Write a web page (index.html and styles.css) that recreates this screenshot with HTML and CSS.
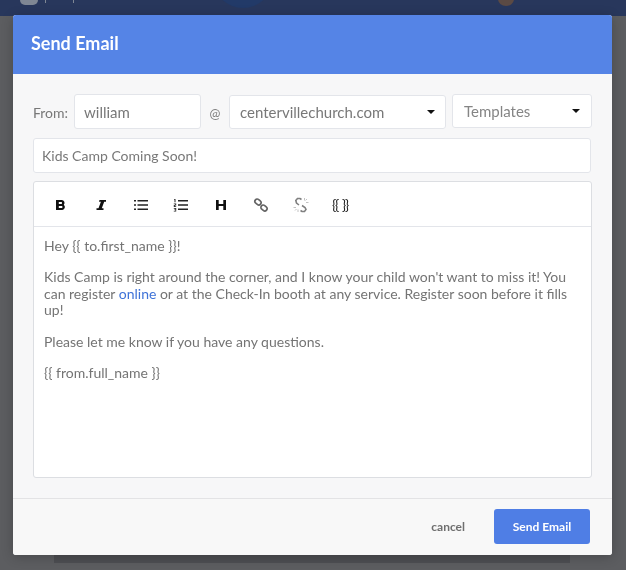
FILE: index.html
```html
<!DOCTYPE html>
<html lang="en">
<head>
<meta charset="utf-8">
<title>Send Email</title>
<link rel="stylesheet" href="styles.css">
</head>
<body>
<div class="backdrop">
  <div class="nav">
    <span class="nav-logo"></span>
    <span class="nav-tick tick-a"></span>
    <span class="nav-tick tick-b"></span>
    <span class="nav-circle"></span>
    <span class="nav-avatar"></span>
  </div>
  <div class="under-panel"></div>
</div>
<main class="modal">
  <header class="modal-head"><h1>Send Email</h1></header>
  <section class="modal-body">
    <div class="from-row">
      <label class="from-label">From:</label>
      <div class="field user">william</div>
      <span class="at">@</span>
      <div class="field domain"><span>centervillechurch.com</span><i class="caret"></i></div>
      <div class="field templates"><span>Templates</span><i class="caret"></i></div>
    </div>
    <div class="field subject">Kids Camp Coming Soon!</div>
    <div class="editor">
      <div class="toolbar">
        <span class="tool"><svg width="16" height="16" viewBox="0 0 16 16"><path d="M3 3h5.800a2.800 2.800 0 0 1 2 4.700A3 3 0 0 1 9.300 13H3zM5.800 5.100v1.900h2.400a.95.95 0 0 0 0-1.900zM5.800 9v1.900h2.800a.95.95 0 0 0 0-1.900z" fill="#111" fill-rule="evenodd"/></svg></span>
        <span class="tool"><svg width="16" height="16" viewBox="0 0 16 16"><path d="M6.500 3H13v1.800h-1.800l-2.400 6.400H10.500V13H3.500v-1.800h2l2.400-6.400H6z" fill="#111"/></svg></span>
        <span class="tool"><svg width="16" height="16" viewBox="0 0 16 16"><path d="M1 3h2v1.500H1zM1 7.300h2v1.500H1zM1 11.500h2V13H1zM4.500 3H15v1.500H4.500zM4.500 7.300H15v1.500H4.500zM4.500 11.500H15V13H4.500z" fill="#222"/></svg></span>
        <span class="tool"><svg width="16" height="16" viewBox="0 0 16 16"><path d="M1.200 2h1.300v3.200H1.500V3h-.3zM.8 6.500h2.400v2H1.800v.7h1.400V10H.8V8h1.400v-.7H.8zM.8 11h2.400v3.500H.8v-.7h1.600v-.7H1.300v-.6h1.100v-.7H.8zM5 3h10v1.500H5zM5 7.300h10v1.500H5zM5 11.500h10V13H5z" fill="#222"/></svg></span>
        <span class="tool"><svg width="16" height="16" viewBox="0 0 16 16"><path d="M3 3h2.700v4h4.600V3H13v10h-2.700V9H5.700v4H3z" fill="#111"/></svg></span>
        <span class="tool"><svg width="16" height="16" viewBox="0 0 16 16" fill="none" stroke="#666" stroke-width="1.700"><rect x="1.700" y="2.700" width="6.600" height="4.600" rx="2.300" transform="rotate(40 5 5)"/><rect x="7.700" y="8.700" width="6.600" height="4.600" rx="2.300" transform="rotate(40 11 11)"/></svg></span>
        <span class="tool"><svg width="16" height="16" viewBox="0 0 16 16" fill="none" stroke="#808080" stroke-width="1.600"><path d="M8.500 2.500 7 1.500H4.500L2.800 3.500 3.500 6 6 8"/><path d="M9 8.500 12 10.500 13 12.500 11.500 14.500H9L7.500 13.500"/><path d="M11.500 1v2.500M14 2 12.500 3.500M15.500 5.500H13M.5 10.500H3M2 13.500 3.500 12M5 15v-2.500" stroke="#bbb" stroke-width=".9"/></svg></span>
        <span class="tool tool-text">{{ }}</span>
      </div>
      <div class="content">
        <p>Hey {{ to.first_name }}!</p>
        <p>Kids Camp is right around the corner, and I know your child won't want to miss it! You can register <a href="#">online</a> or at the Check-In booth at any service. Register soon before it fills up!</p>
        <p>Please let me know if you have any questions.</p>
        <p>{{ from.full_name }}</p>
      </div>
    </div>
  </section>
  <footer class="modal-foot">
    <button class="cancel">cancel</button>
    <button class="send">Send Email</button>
  </footer>
</main>
</body>
</html>
```
FILE: styles.css
```css
* { box-sizing: border-box; }
html, body { margin: 0; height: 100%; }
body {
  width: 626px;
  height: 570px;
  overflow: hidden;
  position: relative;
  background: #5c5d60;
  font-family: Lato, "Liberation Sans", sans-serif;
  color: #6b6b6b;
  padding: 15px 14px 15px 13px;
}
.backdrop { position: absolute; inset: 0; }
.nav {
  position: absolute; left: 0; top: 0; right: 0; height: 16px;
  background: #28375c;
  overflow: hidden;
}
.nav-logo { position: absolute; left: 20px; top: -10px; width: 18px; height: 15px; border-radius: 5px; background: #7f8794; }
.nav-tick { position: absolute; top: 0; width: 1px; height: 3px; background: #7f8794; }
.tick-a { left: 45px; }
.tick-b { left: 73px; }
.nav-circle { position: absolute; left: 213px; top: -52px; width: 60px; height: 60px; border-radius: 50%; background: #223a68; }
.nav-avatar { position: absolute; left: 498px; top: -8px; width: 16px; height: 14px; border-radius: 50%; background: #5b4a44; }
.under-panel { position: absolute; left: 54px; top: 540px; width: 516px; height: 23px; background: #4d4e52; }
.modal {
  position: relative;
  width: 599px;
  height: 540px;
  display: flex;
  flex-direction: column;
  background: #f7f7f8;
  border-radius: 3px;
  overflow: hidden;
  box-shadow: 0 2px 12px rgba(0, 0, 0, .22);
  will-change: transform;
}
.modal-head {
  height: 59px;
  flex: none;
  background: #5584e6;
  display: flex;
  align-items: center;
  padding: 0 18px 4px;
}
.modal-head h1 { margin: 0; color: #fff; font-size: 18px; font-weight: 700; line-height: 1; }
.modal-body { flex: 1; padding: 20px 20px 0; min-height: 0; }
.from-row { display: flex; align-items: flex-start; height: 35px; }
.from-label { font-size: 14px; line-height: 38px; width: 41px; flex: none; color: #787878; }
.field {
  background: #fff;
  border: 1px solid #e3e5ea;
  border-radius: 3px;
  color: #787878;
  font-size: 14px;
  display: flex;
  align-items: center;
  justify-content: space-between;
}
.user { width: 127px; height: 35px; padding: 0 9px; font-size: 15px; }
.at { width: 28px; flex: none; text-align: center; font-size: 13px; line-height: 38px; color: #808080; }
.domain { width: 217px; height: 34px; margin-top: 1px; padding: 0 10px; font-size: 15px; }
.templates { width: 140px; height: 34px; margin-left: 6px; padding: 0 11px; font-size: 15px; color: #858585; }
.caret { width: 0; height: 0; border-left: 4px solid transparent; border-right: 4px solid transparent; border-top: 4px solid #111; }
.subject { height: 35px; margin-top: 9px; width: 558px; padding: 0 8px; }
.editor { margin-top: 8px; width: 559px; height: 297px; background: #fff; border: 1px solid #dcdee2; border-radius: 3px; }
.toolbar { height: 45px; display: flex; align-items: center; padding: 1px 0 0 19px; border-bottom: 1px solid #e3e5ea; }
.tool { width: 40px; height: 16px; flex: none; display: flex; }
.tool-text { font-size: 14px; line-height: 16px; color: #222; width: auto; margin-left: -1px; letter-spacing: -1.3px; word-spacing: 2px; }
.content { padding: 11px 10px 10px; font-size: 14px; line-height: 16.400px; color: #747474; }
.content p { margin: 0 0 15px; }
.content a { color: #3f73d8; text-decoration: none; }
.modal-foot {
  height: 57px;
  flex: none;
  border-top: 1px solid #e3e3e5;
  display: flex;
  align-items: center;
  justify-content: flex-end;
  padding: 0 22px 2px 0;
  background: #f8f8f8;
}
button { font-family: inherit; border: 0; cursor: pointer; }
.cancel { background: none; color: #6f6f6f; font-size: 12px; font-weight: 700; margin-right: 29px; padding: 0; }
.send { width: 96px; height: 35px; border-radius: 3px; background: #4f7ee5; color: #fff; font-size: 12px; font-weight: 700; }
```
